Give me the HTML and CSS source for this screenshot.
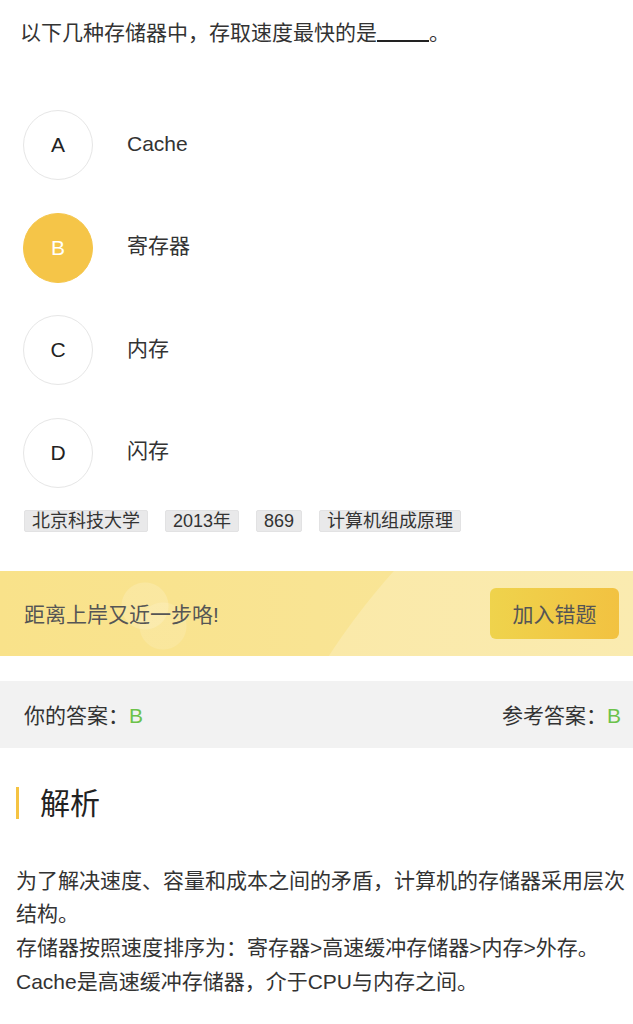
FILE: index.html
```html
<!DOCTYPE html>
<html lang="zh-CN">
<head>
<meta charset="utf-8">
<title>题目</title>
<link rel="stylesheet" href="styles.css">
</head>
<body>
<div class="page">
  <div class="question">以下几种存储器中，存取速度最快的是<span class="blank"></span>。</div>

  <div class="options">
    <div class="option"><span class="circle">A</span><span class="opt-text">Cache</span></div>
    <div class="option"><span class="circle selected">B</span><span class="opt-text">寄存器</span></div>
    <div class="option"><span class="circle">C</span><span class="opt-text">内存</span></div>
    <div class="option"><span class="circle">D</span><span class="opt-text">闪存</span></div>
  </div>

  <div class="tags">
    <span class="tag">北京科技大学</span>
    <span class="tag">2013年</span>
    <span class="tag">869</span>
    <span class="tag">计算机组成原理</span>
  </div>

  <div class="banner">
    <span class="banner-text">距离上岸又近一步咯!</span>
    <button class="banner-btn">加入错题</button>
  </div>

  <div class="answers">
    <span>你的答案：<em class="ans">B</em></span>
    <span>参考答案：<em class="ans">B</em></span>
  </div>

  <div class="analysis-title"><span class="bar"></span><span class="title-text">解析</span></div>

  <div class="analysis">
    为了解决速度、容量和成本之间的矛盾，计算机的存储器采用层次结构。<br>
    存储器按照速度排序为：寄存器&gt;高速缓冲存储器&gt;内存&gt;外存。<br>
    Cache是高速缓冲存储器，介于CPU与内存之间。
  </div>
</div>
</body>
</html>
```
FILE: styles.css
```css
* { box-sizing: border-box; }
html, body { margin: 0; padding: 0; background: #fff; }
body {
  font-family: "Liberation Sans", "Noto Sans CJK SC", sans-serif;
  color: #333;
  width: 633px;
}
.page { display: flex; flex-direction: column; }

.question {
  margin-top: 18px;
  padding: 0 20px;
  font-size: 21px;
  line-height: 30px;
  color: #333;
}
.blank {
  display: inline-block;
  width: 52px;
  height: 21px;
  border-bottom: 2px solid #222;
  vertical-align: -2px;
}

.options {
  margin-top: 62px;
  padding-left: 23px;
  display: flex;
  flex-direction: column;
  gap: 32.5px;
}
.option { display: flex; align-items: center; height: 70px; }
.circle {
  width: 70px; height: 70px;
  border-radius: 50%;
  border: 1px solid #e6e6e6;
  display: flex; align-items: center; justify-content: center;
  font-size: 21px;
  color: #222;
  flex: none;
}
.circle.selected { background: #f5c548; border-color: #f5c548; color: #fff; }
.opt-text { margin-left: 34px; font-size: 21px; line-height: 26px; color: #333; margin-top: -3px; }

.tags {
  margin-top: 22px;
  padding-left: 24px;
  display: flex;
  gap: 17px;
}
.tag {
  background: #e9e9ea;
  border: 1px solid #e2e2e3;
  border-radius: 2px;
  font-size: 18px;
  line-height: 20px;
  padding: 0 7px;
  color: #333;
}

.banner {
  margin-top: 39px;
  height: 85px;
  display: flex;
  align-items: center;
  justify-content: space-between;
  padding: 0 14px 0 24px;
  background:
    radial-gradient(circle at 145px 35px, rgba(255,255,255,0.16) 0 23px, transparent 24px),
    radial-gradient(circle at 163px 55px, rgba(255,255,255,0.13) 0 23px, transparent 24px),
    radial-gradient(circle at 920px 470px, rgba(255,255,255,0.2) 0 705px, transparent 706px),
    linear-gradient(90deg, #f9e28a, #f9e69c);
}
.banner-text { font-size: 21px; color: #555; }
.banner-btn {
  width: 129px; height: 51px;
  border: none;
  border-radius: 6px;
  background: linear-gradient(90deg, #efd34c, #f2c241);
  font-family: inherit;
  font-size: 21px;
  color: #555;
  padding: 0;
}

.answers {
  margin-top: 25px;
  height: 67px;
  background: #f2f2f2;
  display: flex;
  align-items: center;
  justify-content: space-between;
  padding: 0 12px 0 24px;
  font-size: 21px;
  color: #333;
}
.ans { font-style: normal; color: #6cc24a; }

.analysis-title {
  margin-top: 39px;
  display: flex;
  align-items: center;
  padding-left: 16px;
  height: 32px;
}
.bar { width: 3px; height: 32px; background: #f5c342; flex: none; }
.title-text { margin-left: 21px; font-size: 30px; color: #222; line-height: 32px; margin-top: 3px; }

.analysis {
  margin-top: 45px;
  padding: 0 4px 0 16px;
  font-size: 21px;
  line-height: 33.7px;
  color: #333;
}
```
